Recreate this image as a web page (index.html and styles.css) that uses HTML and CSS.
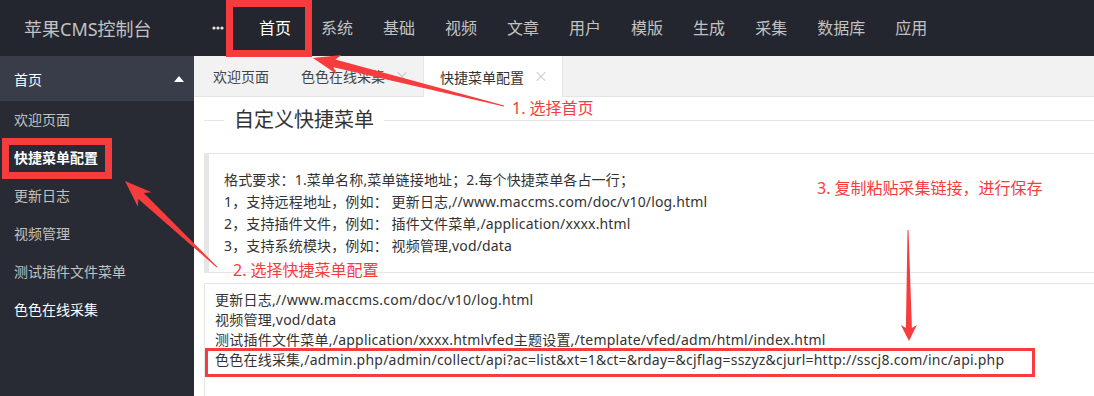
FILE: index.html
```html
<!DOCTYPE html>
<html lang="zh-CN">
<head>
  <meta charset="UTF-8" />
  <meta name="viewport" content="width=device-width, initial-scale=1.0"/>
  <title>苹果CMS控制台</title>
  <link rel="stylesheet" href="styles.css">
</head>
<body>
  <div class="header">
    <div class="logo">苹果CMS控制台</div>
    <ul class="nav">
      <li class="more">
        <svg width="12" height="4" viewBox="0 0 12 4"><circle cx="2" cy="2" r="1.6"/><circle cx="6" cy="2" r="1.6"/><circle cx="10" cy="2" r="1.6"/></svg>
      </li>
      <li class="on">首页</li>
      <li>系统</li>
      <li>基础</li>
      <li>视频</li>
      <li>文章</li>
      <li>用户</li>
      <li>模版</li>
      <li>生成</li>
      <li>采集</li>
      <li>数据库</li>
      <li>应用</li>
    </ul>
  </div>

  <div class="wrap">
    <div class="side">
      <div class="side-title">首页<i class="caret"></i></div>
      <ul class="side-menu">
        <li>欢迎页面</li>
        <li class="on">快捷菜单配置</li>
        <li>更新日志</li>
        <li>视频管理</li>
        <li>测试插件文件菜单</li>
        <li class="white">色色在线采集</li>
      </ul>
    </div>

    <div class="main">
      <ul class="tabs">
        <li>欢迎页面</li>
        <li>色色在线采集<i class="close"></i></li>
        <li class="this">快捷菜单配置<i class="close"></i></li>
      </ul>

      <div class="content">
        <div class="field-title"><span>自定义快捷菜单</span></div>

        <div class="quote">
          格式要求：1.菜单名称,菜单链接地址；2.每个快捷菜单各占一行；<br>
          1，支持远程地址，例如： 更新日志,//www.maccms.com/doc/v10/log.html<br>
          2，支持插件文件，例如： 插件文件菜单,/application/xxxx.html<br>
          3，支持系统模块，例如： 视频管理,vod/data
        </div>

        <textarea class="quick-menu" spellcheck="false">更新日志,//www.maccms.com/doc/v10/log.html
视频管理,vod/data
测试插件文件菜单,/application/xxxx.htmlvfed主题设置,/template/vfed/adm/html/index.html
色色在线采集,/admin.php/admin/collect/api?ac=list&amp;xt=1&amp;ct=&amp;rday=&amp;cjflag=sszyz&amp;cjurl=http://sscj8.com/inc/api.php</textarea>
      </div>
    </div>
  </div>

  <!-- 标注 -->
  <svg class="marks" width="1094" height="396" viewBox="0 0 1094 396">
    <rect x="229.5" y="3.5" width="79" height="50" />
    <rect x="5.5" y="141.5" width="103" height="34" />
    <rect class="thin" x="206.5" y="349.5" width="827" height="26" />
    <polygon class="arrow" points="-197,-0.5 -22,-4 -27,-10 0,0 -27,10 -22,4 -197,0.5" transform="translate(313 58) rotate(194.1)" />
    <polygon class="arrow" points="-126,-0.5 -22,-4 -27,-10 0,0 -27,10 -22,4 -126,0.5" transform="translate(125 181) rotate(223.1)" />
    <polygon class="arrow" points="-111,-0.5 -13,-3 -16,-8 0,0 -16,8 -13,3 -111,0.5" transform="translate(909 341) rotate(89.5)" />
  </svg>
  <div class="note note-1">1. 选择首页</div>
  <div class="note note-2">2. 选择快捷菜单配置</div>
  <div class="note note-3">3. 复制粘贴采集链接，进行保存</div>
</body>
</html>
```

FILE: styles.css
```css
* {
  box-sizing: border-box;
}
body {
  margin: 0;
  width: 1094px;
  height: 396px;
  overflow: hidden;
  position: relative;
  font-family: "Noto Sans", "Noto Sans CJK SC", sans-serif;
  font-size: 14px;
  color: #333;
  background: #fff;
}
ul {
  margin: 0;
  padding: 0;
  list-style: none;
}

/* 顶部 */
.header {
  height: 56px;
  background: #23262e;
  display: flex;
  align-items: center;
}
.logo {
  width: 194px;
  padding-left: 24px;
  font-size: 18px;
  color: #c2c2c2;
  white-space: nowrap;
}
.nav {
  display: flex;
  height: 56px;
}
.nav li {
  padding: 0 15px;
  line-height: 56px;
  font-size: 16px;
  color: #c2c2c2;
}
.nav li.on {
  color: #fff;
}
.nav li.more {
  padding: 0 20px 0 18px;
  display: flex;
  align-items: center;
}
.nav li.more svg {
  fill: #e6e6e6;
}

/* 左侧菜单 */
.wrap {
  display: flex;
  height: 340px;
}
.side {
  width: 194px;
  flex: none;
  background: #282b33;
}
.side-title {
  height: 45px;
  background: #393d49;
  color: #fff;
  display: flex;
  align-items: center;
  justify-content: space-between;
  padding: 0 10px 0 14px;
}
.caret {
  width: 0;
  height: 0;
  border-left: 5.5px solid transparent;
  border-right: 5.5px solid transparent;
  border-bottom: 6px solid #fff;
}
.side-menu li {
  height: 38px;
  line-height: 38px;
  padding-left: 14px;
  color: #c2c2c2;
}
.side-menu li.on {
  color: #fff;
  font-weight: bold;
}
.side-menu li.white {
  color: #fff;
}

/* 标签页 */
.main {
  flex: none;
  width: 960px;
}
.tabs {
  display: flex;
  height: 41px;
  padding-left: 3px;
  background: #f2f2f2;
  border-bottom: 1px solid #e6e6e6;
}
.tabs li {
  display: flex;
  align-items: center;
  height: 40px;
  padding: 0 16px;
  color: #444;
}
.tabs li.this {
  height: 41px;
  background: #fff;
  color: #333;
  border-left: 1px solid #e6e6e6;
  border-right: 1px solid #e6e6e6;
}
.close {
  position: relative;
  width: 10px;
  height: 10px;
  margin-left: 12px;
}
.close::before,
.close::after {
  content: "";
  position: absolute;
  left: -1px;
  top: 4.5px;
  width: 12px;
  height: 1px;
  background: #c2c2c2;
  transform: rotate(45deg);
}
.close::after {
  transform: rotate(-45deg);
}

/* 内容 */
.content {
  padding: 9px 0 0 10px;
}
.field-title {
  display: flex;
  align-items: center;
  height: 28px;
}
.field-title::before,
.field-title::after {
  content: "";
  height: 1px;
  background: #e6e6e6;
}
.field-title::before {
  width: 20px;
}
.field-title::after {
  flex: 1;
}
.field-title span {
  padding: 0 10px;
  font-size: 20px;
  line-height: 28px;
  color: #333;
}
.quote {
  margin-top: 19px;
  padding: 15px;
  line-height: 22px;
  letter-spacing: 0.15px;
  border: 1px solid #e6e6e6;
  border-left-width: 5px;
  white-space: nowrap;
}
.quick-menu {
  display: block;
  width: 100%;
  height: 160px;
  margin-top: 10px;
  padding: 6px 10px;
  border: 1px solid #e6e6e6;
  font-family: "Noto Sans", "Noto Sans CJK SC", sans-serif;
  font-size: 14px;
  line-height: 20px;
  letter-spacing: 0.22px;
  color: #333;
  resize: none;
  outline: none;
  white-space: pre;
  overflow: hidden;
}

/* 标注 */
.marks {
  position: absolute;
  left: 0;
  top: 0;
  pointer-events: none;
}
.marks rect {
  fill: none;
  stroke: #f63c3c;
  stroke-width: 7;
}
.marks rect.thin {
  stroke-width: 3;
}
.marks .arrow {
  fill: #f63c3c;
}
.note {
  position: absolute;
  font-size: 16px;
  line-height: 20px;
  color: #f63c3c;
  white-space: nowrap;
}
.note-1 {
  left: 512px;
  top: 98px;
}
.note-2 {
  left: 233px;
  top: 260px;
}
.note-3 {
  left: 817px;
  top: 178px;
}
```
